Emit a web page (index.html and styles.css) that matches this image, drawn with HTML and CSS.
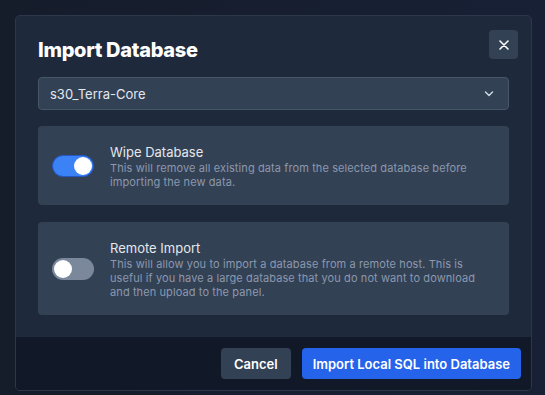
FILE: index.html
```html
<!DOCTYPE html>
<html>
<head>
  <meta charset="UTF-8">
  <title>Import Database</title>
  <meta name="viewport" content="width=device-width, initial-scale=1">
  <link rel="stylesheet" href="styles.css">
</head>
<body>

<div class="modal">
  <button class="close-btn" aria-label="Close">
    <svg width="10" height="10" viewBox="0 0 10 10">
      <path d="M1 1 L9 9 M9 1 L1 9" stroke="#fff" stroke-width="1.6" stroke-linecap="round"/>
    </svg>
  </button>

  <div class="modal-body">
    <h2>Import Database</h2>

    <!-- Database picker -->
    <div class="select">
      <span>s30_Terra-Core</span>
      <svg width="10" height="6" viewBox="0 0 10 6">
        <path d="M1.5 1 L5 4.5 L8.5 1" stroke="#cbd5e1" stroke-width="1.5" fill="none" stroke-linecap="round" stroke-linejoin="round"/>
      </svg>
    </div>

    <!-- Options -->
    <div class="option">
      <div class="toggle on"><span class="knob"></span></div>
      <div class="option-text">
        <div class="option-title">Wipe Database</div>
        <p>This will remove all existing data from the selected database before importing the new data.</p>
      </div>
    </div>

    <div class="option">
      <div class="toggle"><span class="knob"></span></div>
      <div class="option-text">
        <div class="option-title">Remote Import</div>
        <p>This will allow you to import a database from a remote host. This is useful if you have a large database that you do not want to download and then upload to the panel.</p>
      </div>
    </div>
  </div>

  <div class="modal-footer">
    <button class="btn btn-grey">Cancel</button>
    <button class="btn btn-blue">Import Local SQL into Database</button>
  </div>
</div>

</body>
</html>
```

FILE: styles.css
```css
/* Dark backdrop behind the dialog */
body {
  font-family: Inter, "Noto Sans", sans-serif;
  margin: 0;
  padding: 15px 0 0 15px;
  min-height: 395px;
  box-sizing: border-box;
  background: linear-gradient(90deg, #151c2a, #172035);
}
.modal {
  position: relative;
  width: 517px;
  box-sizing: border-box;
  background-color: #1e293b;
  border: 1px solid #2c3749;
  border-radius: 5px;
  overflow: hidden;
}
.close-btn {
  position: absolute;
  top: 14px;
  right: 13px;
  width: 29px;
  height: 29px;
  padding: 0;
  border: none;
  border-radius: 4px;
  background-color: #334155;
  display: flex;
  align-items: center;
  justify-content: center;
}
.modal-body {
  padding: 20px 22px 22px;
}
h2 {
  margin: 0 0 13px;
  font-size: 20px;
  line-height: 28px;
  font-weight: 800;
  color: #fff;
  letter-spacing: -0.3px;
}
.select {
  height: 33px;
  box-sizing: border-box;
  display: flex;
  align-items: center;
  justify-content: space-between;
  padding: 0 14px 0 11px;
  background-color: #334155;
  border: 1px solid #475569;
  border-radius: 4px;
  color: #e2e8f0;
  font-size: 13px;
}
.option {
  display: flex;
  align-items: center;
  gap: 16px;
  margin-top: 16px;
  padding: 17px 26px 16px 14px;
  background-color: #334155;
  border-radius: 4px;
}
.option + .option {
  margin-top: 17px;
}
.toggle {
  flex: none;
  width: 42px;
  height: 22px;
  box-sizing: border-box;
  border-radius: 11px;
  background-color: #7b889c;
  padding: 2px;
  display: flex;
}
.toggle.on {
  background-color: #3b82f6;
  border: 1px solid #2458c8;
  padding: 1px;
  justify-content: flex-end;
}
.knob {
  width: 18px;
  height: 18px;
  border-radius: 50%;
  background-color: #fff;
}
.option-title {
  font-size: 13px;
  line-height: 18px;
  color: #e5e7eb;
}
.option-text p {
  margin: 0;
  font-size: 11px;
  line-height: 14px;
  letter-spacing: 0.1px;
  color: #8b98ad;
}
.modal-footer {
  display: flex;
  justify-content: flex-end;
  gap: 11px;
  padding: 11px 10px 11px;
  background-color: #111827;
}
.btn {
  height: 31px;
  padding: 0 13px;
  border: none;
  border-radius: 4px;
  font-family: Inter, sans-serif;
  font-size: 13px;
  font-weight: 600;
  color: #fff;
}
.btn-grey {
  background-color: #334155;
}
.btn-blue {
  padding: 0 11px;
  background-color: #2563eb;
}
```
